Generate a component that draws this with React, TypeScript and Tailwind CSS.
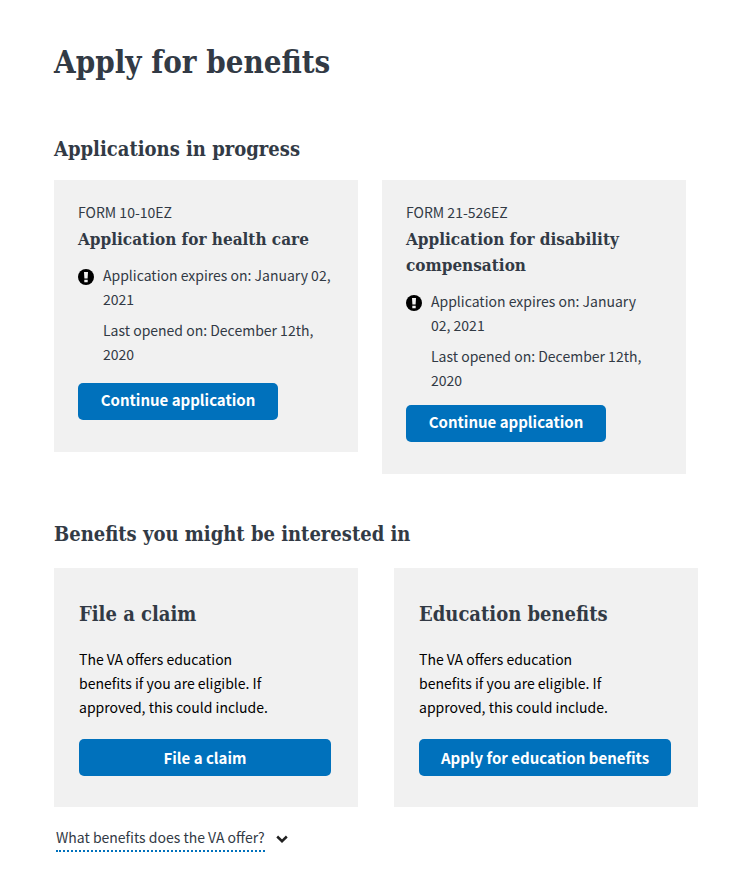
import React from "react";

const SERIF = "font-['DejaVu_Serif_Condensed','DejaVu_Serif',serif] font-bold text-[#323a45]";

function AlertIcon() {
  return (
    <svg className="mt-[6px] size-4 shrink-0" viewBox="0 0 16 16" aria-hidden="true">
      <circle cx="8" cy="8" r="8" fill="#000" />
      <path d="M6 2.900h4l-.4 6.700H6.400zM6.300 10.700h3.400v2.600H6.300z" fill="#f1f1f1" />
    </svg>
  );
}

type InProgress = {
  form: string;
  title: string;
  expires: string;
  opened: string;
  datesWidth: string;
  buttonSpacing: string;
};

const inProgress: InProgress[] = [
  {
    form: "FORM 10-10EZ",
    title: "Application for health care",
    expires: "January 02, 2021",
    opened: "December 12th, 2020",
    datesWidth: "max-w-60",
    buttonSpacing: "mt-4",
  },
  {
    form: "FORM 21-526EZ",
    title: "Application for disability compensation",
    expires: "January 02, 2021",
    opened: "December 12th, 2020",
    datesWidth: "max-w-55",
    buttonSpacing: "mt-3",
  },
];

const suggestions = [
  { title: "File a claim", action: "File a claim" },
  { title: "Education benefits", action: "Apply for education benefits" },
];

function ApplicationCard({ form, title, expires, opened, datesWidth, buttonSpacing }: InProgress) {
  return (
    <article className="w-full bg-[#f1f1f1] px-6 pt-[23px] pb-8 sm:w-76">
      <p className="leading-[18px]">{form}</p>
      <h3 className={`${SERIF} mt-[5px] text-[17px] leading-[26px]`}>{title}</h3>
      <div className="mt-[11px] mb-px flex gap-[9px]">
        <AlertIcon />
        <div className={`${datesWidth} flex flex-col gap-[7px]`}>
          <p>{`Application expires on: ${expires}`}</p>
          <p>{`Last opened on: ${opened}`}</p>
        </div>
      </div>
      <button
        type="button"
        className={`${buttonSpacing} h-[37px] w-50 cursor-pointer rounded-[5px] bg-[#0071bc] pb-1 text-[15px] font-bold text-white`}
      >
        Continue application
      </button>
    </article>
  );
}

export default function App() {
  return (
    <main className="bg-white pt-10 pr-10 pb-10 pl-[54px] font-['Noto_Sans_CJK_SC',sans-serif] text-[14px] leading-6 text-[#323a45]">
      <h1 className={`${SERIF} text-[31px] leading-[44px]`}>Apply for benefits</h1>

      <section className="mt-[50px]">
        <h2 className={`${SERIF} text-[20px] leading-[30px]`}>Applications in progress</h2>
        <div className="mt-4 flex flex-wrap items-start gap-6">
          {inProgress.map((item) => (
            <ApplicationCard key={item.form} {...item} />
          ))}
        </div>
      </section>

      <section className="mt-[45px]">
        <h2 className={`${SERIF} text-[20px] leading-[30px]`}>Benefits you might be interested in</h2>
        <div className="mt-[19px] flex flex-wrap items-start gap-9">
          {suggestions.map((item) => (
            <article key={item.title} className="w-full bg-[#f1f1f1] px-[25px] pt-[31px] pb-[31px] sm:w-76">
              <h3 className={`${SERIF} text-[20px] leading-[30px]`}>{item.title}</h3>
              <p className="mt-[18px] max-w-50 text-black">
                The VA offers education benefits if you are eligible. If approved, this could include.
              </p>
              <button
                type="button"
                className="mt-5 h-[37px] w-full max-w-[252px] cursor-pointer rounded-[5px] bg-[#0071bc] text-[15px] font-bold text-white"
              >
                {item.action}
              </button>
            </article>
          ))}
        </div>
      </section>

      <button type="button" className="mt-[18px] ml-0.5 flex cursor-pointer items-center gap-[11px]">
        <span className="border-b-2 border-dotted border-[#0071bc] pb-px">What benefits does the VA offer?</span>
        <svg className="size-3" viewBox="0 0 12 12" fill="none" aria-hidden="true">
          <path d="M1.200 3.500 6 8.200l4.800-4.700" stroke="#212121" strokeWidth="2.500" />
        </svg>
      </button>
    </main>
  );
}
